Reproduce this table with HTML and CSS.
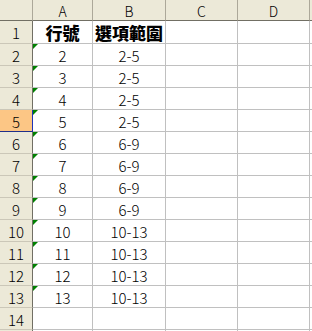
FILE: index.html
```html
<!DOCTYPE html>
<html>
<head>
<meta charset="utf-8">
<link rel="stylesheet" href="styles.css">
</head>
<body>
<div class="sheet">
  <div class="row hdr-row">
    <div class="c rh corner"></div>
    <div class="c ch colA">A</div>
    <div class="c ch colB">B</div>
    <div class="c ch colC">C</div>
    <div class="c ch colD">D</div>
    <div class="c ch colE"></div>
  </div>
  <div class="row r1">
    <div class="c rh">1</div>
    <div class="c colA bold">行號</div>
    <div class="c colB bold">選項範圍</div>
    <div class="c colC"></div>
    <div class="c colD"></div>
    <div class="c colE"></div>
  </div>
  <div class="row"><div class="c rh">2</div><div class="c colA tri">2</div><div class="c colB">2-5</div><div class="c colC"></div><div class="c colD"></div><div class="c colE"></div></div>
  <div class="row"><div class="c rh">3</div><div class="c colA tri">3</div><div class="c colB">2-5</div><div class="c colC"></div><div class="c colD"></div><div class="c colE"></div></div>
  <div class="row"><div class="c rh">4</div><div class="c colA tri">4</div><div class="c colB">2-5</div><div class="c colC"></div><div class="c colD"></div><div class="c colE"></div></div>
  <div class="row"><div class="c rh sel">5</div><div class="c colA tri">5</div><div class="c colB">2-5</div><div class="c colC"></div><div class="c colD"></div><div class="c colE"></div></div>
  <div class="row"><div class="c rh">6</div><div class="c colA tri">6</div><div class="c colB">6-9</div><div class="c colC"></div><div class="c colD"></div><div class="c colE"></div></div>
  <div class="row"><div class="c rh">7</div><div class="c colA tri">7</div><div class="c colB">6-9</div><div class="c colC"></div><div class="c colD"></div><div class="c colE"></div></div>
  <div class="row"><div class="c rh">8</div><div class="c colA tri">8</div><div class="c colB">6-9</div><div class="c colC"></div><div class="c colD"></div><div class="c colE"></div></div>
  <div class="row"><div class="c rh">9</div><div class="c colA tri">9</div><div class="c colB">6-9</div><div class="c colC"></div><div class="c colD"></div><div class="c colE"></div></div>
  <div class="row"><div class="c rh">10</div><div class="c colA tri">10</div><div class="c colB">10-13</div><div class="c colC"></div><div class="c colD"></div><div class="c colE"></div></div>
  <div class="row"><div class="c rh">11</div><div class="c colA tri">11</div><div class="c colB">10-13</div><div class="c colC"></div><div class="c colD"></div><div class="c colE"></div></div>
  <div class="row"><div class="c rh">12</div><div class="c colA tri">12</div><div class="c colB">10-13</div><div class="c colC"></div><div class="c colD"></div><div class="c colE"></div></div>
  <div class="row"><div class="c rh">13</div><div class="c colA tri">13</div><div class="c colB">10-13</div><div class="c colC"></div><div class="c colD"></div><div class="c colE"></div></div>
  <div class="row"><div class="c rh">14</div><div class="c colA"></div><div class="c colB"></div><div class="c colC"></div><div class="c colD"></div><div class="c colE"></div></div>
  <div class="row"><div class="c rh"></div><div class="c colA"></div><div class="c colB"></div><div class="c colC"></div><div class="c colD"></div><div class="c colE"></div></div>
</div>
</body>
</html>
```
FILE: styles.css
```css
html, body {
  margin: 0;
  padding: 0;
  background: #ffffff;
  overflow: hidden;
}
.sheet {
  width: 312px;
  height: 331px;
  overflow: hidden;
  font-family: "Noto Sans CJK TC", "Liberation Sans", sans-serif;
  font-weight: 300;
  font-size: 15px;
  color: #000;
}
.row {
  display: flex;
  height: 22px;
}
.hdr-row { height: 21px; }
.r1 { height: 23px; }
.c {
  box-sizing: border-box;
  flex: none;
  height: 100%;
  border-right: 1px solid #c0c0c0;
  border-bottom: 1px solid #c0c0c0;
  display: flex;
  align-items: center;
  justify-content: center;
  position: relative;
  padding-top: 1px;
  line-height: 1;
}
.rh { width: 33px; }
.colA { width: 60px; }
.colB { width: 73px; }
.colC { width: 72px; }
.colD { width: 72px; }
.colE { width: 20px; border-right: none; }
.rh {
  background: #ece9d8;
  border-right: 1px solid #716f64;
  border-bottom: 1px solid #cbc7b8;
  font-size: 15px;
}
.ch {
  background: #ece9d8;
  border-right: 1px solid #aca899;
  border-bottom: 1px solid #716f64;
  font-size: 14px;
  font-weight: 300;
}
.corner {
  border-right: 1px solid #aca899;
  border-bottom: 1px solid #716f64;
}
.rh.sel {
  background: #fcc685;
  border-right: 1px solid #1f33b8;
  border-bottom: 1px solid #1f2f8a;
}
.bold {
  font-family: "Noto Sans CJK TC", sans-serif;
  font-weight: 900;
  font-size: 17px;
  padding-top: 0;
}
.tri::before {
  content: "";
  position: absolute;
  left: 0;
  top: 0;
  width: 0;
  height: 0;
  border-top: 5px solid #008000;
  border-right: 5px solid transparent;
}
```
